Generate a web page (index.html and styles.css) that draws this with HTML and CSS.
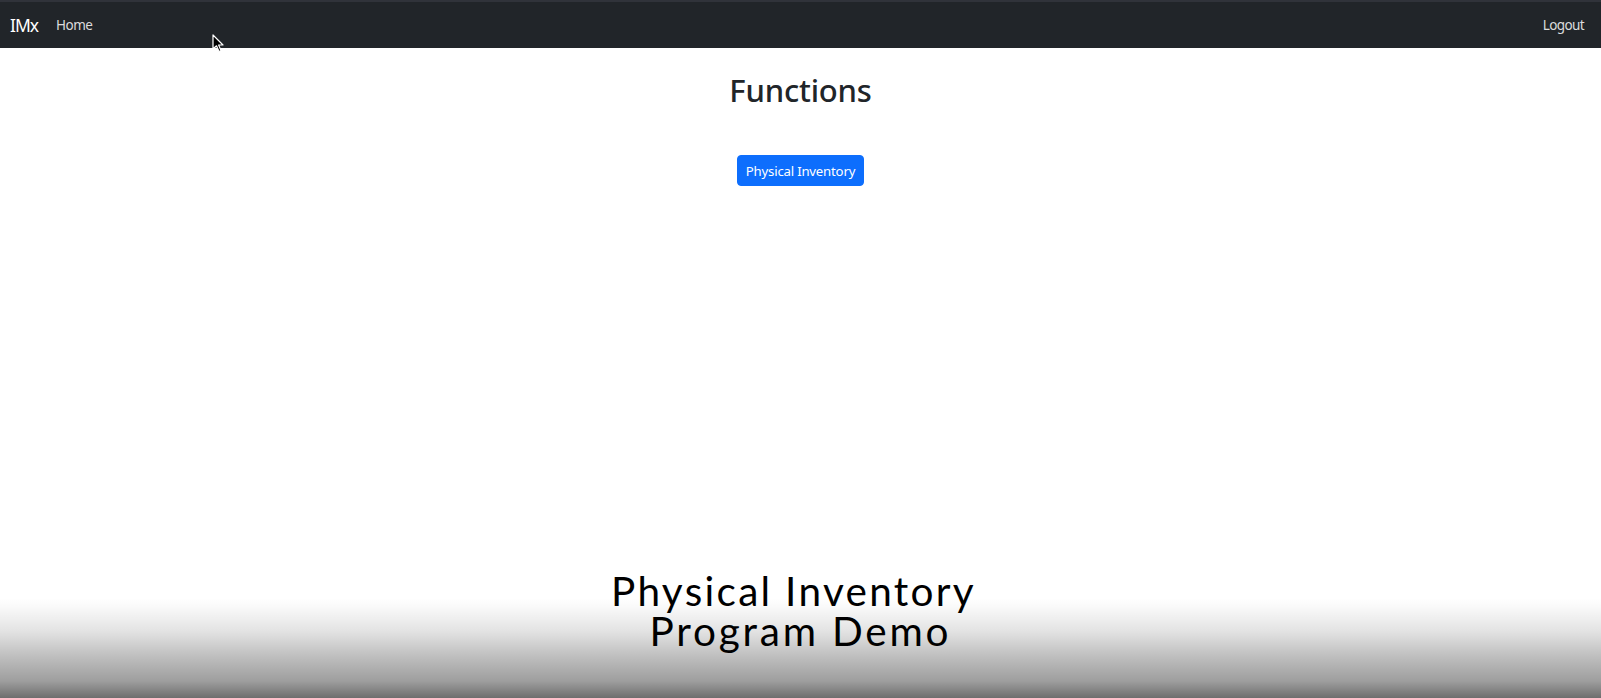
FILE: index.html
```html
<!DOCTYPE html>
<html lang="en">
<head>
<meta charset="utf-8">
<title>IMx - Functions</title>
<link rel="stylesheet" href="styles.css">
</head>
<body>
<nav class="navbar">
  <div class="nav-left">
    <a class="brand" href="#">IMx</a>
    <a class="nav-link" href="#">Home</a>
  </div>
  <a class="nav-link logout" href="#">Logout</a>
</nav>
<main class="main">
  <h2 class="title">Functions</h2>
  <button class="btn-primary" type="button">Physical Inventory</button>
</main>
<div class="caption-overlay">
  <div class="caption">
    <div class="line1">Physical Inventory</div>
    <div class="line2">Program Demo</div>
  </div>
</div>
<svg class="cursor" width="12" height="19" viewBox="0 0 12 19">
  <path d="M1 1 L1 15 L4.5 11.8 L7 17.5 L9 16.6 L6.6 11 L11 11 Z" fill="#000" stroke="#fff" stroke-width="1.2" stroke-linejoin="round"/>
</svg>
</body>
</html>
```

FILE: styles.css
```css
html, body {
  margin: 0;
  padding: 0;
  background: #fff;
  height: 698px;
  overflow: hidden;
}
body {
  font-family: "Noto Sans", "Open Sans", sans-serif;
  color: #212529;
  position: relative;
}
a { text-decoration: none; }

.navbar {
  box-sizing: border-box;
  height: 48px;
  background: #212529;
  border-top: 2px solid #30333a;
  display: flex;
  align-items: center;
  justify-content: space-between;
  padding: 0 17px 0 10px;
}
.nav-left {
  display: flex;
  align-items: center;
  gap: 18px;
}
.brand {
  color: #fff;
  font-size: 17.5px;
  letter-spacing: -1px;
  margin-top: -1px;
}
.nav-link {
  color: rgba(255,255,255,0.85);
  font-size: 13.5px;
  letter-spacing: -0.5px;
}
.logout {
  font-size: 13.5px;
  letter-spacing: -0.6px;
}

.main {
  display: flex;
  flex-direction: column;
  align-items: center;
}
.title {
  margin: 21px 0 0;
  font-size: 31px;
  font-weight: 500;
  line-height: 42px;
  letter-spacing: -0.2px;
  color: #212529;
}
.btn-primary {
  margin-top: 44px;
  box-sizing: border-box;
  height: 31px;
  padding: 0 8px;
  font-family: "Noto Sans", "Open Sans", sans-serif;
  font-size: 13.2px;
  color: #fff;
  background: #0d6efd;
  border: 1px solid #0d6efd;
  border-radius: 4px;
  letter-spacing: -0.2px;
}

.caption-overlay {
  position: absolute;
  left: 0;
  right: 0;
  bottom: 0;
  height: 130px;
  background: linear-gradient(to bottom,
    rgba(0,0,0,0) 0px,
    rgba(0,0,0,0) 30px,
    rgba(0,0,0,0.02) 38px,
    rgba(0,0,0,0.11) 63px,
    rgba(0,0,0,0.25) 88px,
    rgba(0,0,0,0.38) 113px,
    rgba(0,0,0,0.57) 130px);
}
.caption {
  display: flex;
  flex-direction: column;
  align-items: center;
  padding-top: 3px;
  font-family: "Lato", sans-serif;
  font-size: 40.5px;
  line-height: 40px;
  color: #000;
}
.line1 {
  height: 40px;
  padding-right: 14px;
  letter-spacing: 2.3px;
}
.line2 {
  height: 40px;
  letter-spacing: 2.8px;
}

.cursor {
  position: absolute;
  left: 212px;
  top: 34px;
}
```
